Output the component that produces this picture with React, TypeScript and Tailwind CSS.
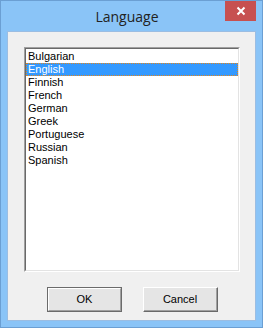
import React from 'react';

const LANGUAGES = ['Bulgarian', 'English', 'Finnish', 'French', 'German', 'Greek', 'Portuguese', 'Russian', 'Spanish'];

export default function App() {
  const selected = 1;

  return (
    <div className="w-[263px] h-[328px] bg-[#8ac4f7] border border-[#6b9fd3] flex flex-col select-none">
      {/* Title bar */}
      <div className="h-[30px] flex items-start shrink-0">
        <div className="flex-1 h-[30px] flex items-center justify-center pl-[28px] text-[14px] text-[#222] font-['Open_Sans',sans-serif]">
          Language
        </div>
        <div className="w-[31px] h-[20px] mr-[6px] bg-[#c75050] flex items-center justify-center">
          <svg width="10" height="10" viewBox="0 0 10 10">
            <path d="M1.5 1.5 L8.5 8.5 M8.5 1.5 L1.5 8.5" stroke="white" strokeWidth="2" />
          </svg>
        </div>
      </div>

      {/* Client area */}
      <div className="flex-1 mx-[6px] mb-[6px] bg-[#f0f0f0] border border-[#9bbde2] flex flex-col font-['Liberation_Sans',Arial,sans-serif] text-[11px] text-black">
        <div className="mt-[15px] ml-[16px] w-[216px] h-[225px] border-t border-l border-t-[#a0a0a0] border-l-[#a0a0a0] border-b border-r border-b-white border-r-white">
          <div className="w-full h-full bg-white border-t border-l border-t-[#696969] border-l-[#696969] border-b border-r border-b-[#e3e3e3] border-r-[#e3e3e3] pt-[1px]">
            {LANGUAGES.map((lang, i) => (
              <div
                key={lang}
                className={
                  i === selected
                    ? 'h-[13px] leading-[11px] pl-[1px] bg-[#3399ff] text-white border border-dotted border-[#e0861f]'
                    : 'h-[13px] leading-[12px] pl-[2px]'
                }
              >
                {lang}
              </div>
            ))}
          </div>
        </div>

        <div className="mt-[15px] flex pl-[39px] gap-[21px]">
          <button className="w-[75px] h-[25px] bg-[#e5e5e5] border border-[#6b6b6b]">
            <div className="w-full h-full border-t border-l border-t-white border-l-white border-b border-r border-b-[#a0a0a0] border-r-[#a0a0a0] flex items-center justify-center">
              OK
            </div>
          </button>
          <button className="w-[75px] h-[25px] bg-[#e5e5e5] border-t border-l border-t-white border-l-white border-b border-r border-b-[#696969] border-r-[#696969]">
            <div className="w-full h-full border-b border-r border-b-[#a0a0a0] border-r-[#a0a0a0] flex items-center justify-center">
              Cancel
            </div>
          </button>
        </div>
      </div>
    </div>
  );
}
